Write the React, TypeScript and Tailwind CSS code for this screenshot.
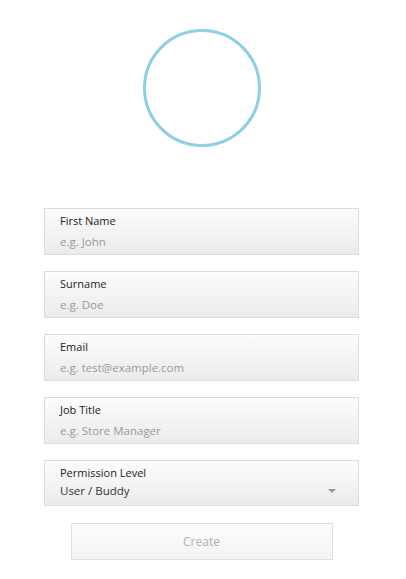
import React from "react";

const fields = [
  { label: "First Name", placeholder: "e.g. John" },
  { label: "Surname", placeholder: "e.g. Doe" },
  { label: "Email", placeholder: "e.g. test@example.com" },
  { label: "Job Title", placeholder: "e.g. Store Manager" },
];

export default function App() {
  return (
    <div
      className="w-[406px] h-[579px] bg-white flex flex-col items-center"
      style={{ fontFamily: '"Open Sans", sans-serif' }}
    >
      <div className="mt-[29px] mr-[3px] w-[118px] h-[118px] rounded-full border-[3px] border-[#8ecfe6]" />
      <div className="mt-[61px] mr-[3px] flex flex-col gap-[16px] w-[315px]">
        {fields.map((f) => (
          <div
            key={f.label}
            className="h-[47px] border border-[#dcdcdc] bg-gradient-to-b from-[#fcfcfc] to-[#ebebeb] pl-[15px] pt-[4px]"
          >
            <div className="text-[11px] leading-[16px] text-[#222]">{f.label}</div>
            <div className="text-[11.5px] leading-[17px] mt-[4px] text-[#999]">{f.placeholder}</div>
          </div>
        ))}
        <div className="h-[46px] border border-[#dcdcdc] bg-gradient-to-b from-[#fcfcfc] to-[#ebebeb] pl-[15px] pr-[22px] pt-[4px]">
          <div className="text-[11px] leading-[16px] text-[#222]">Permission Level</div>
          <div className="flex items-center justify-between mt-[1px]">
            <span className="text-[11.5px] leading-[17px] text-[#333]">User / Buddy</span>
            <span className="w-0 h-0 border-l-[4px] border-r-[4px] border-t-[4px] border-l-transparent border-r-transparent border-t-[#999]" />
          </div>
        </div>
      </div>
      <button className="mt-[17px] mr-[3px] w-[262px] h-[37px] border border-[#e0e0e0] bg-gradient-to-b from-[#fdfdfd] to-[#f3f3f3] text-[12px] text-[#b0b0b0]">
        Create
      </button>
    </div>
  );
}
